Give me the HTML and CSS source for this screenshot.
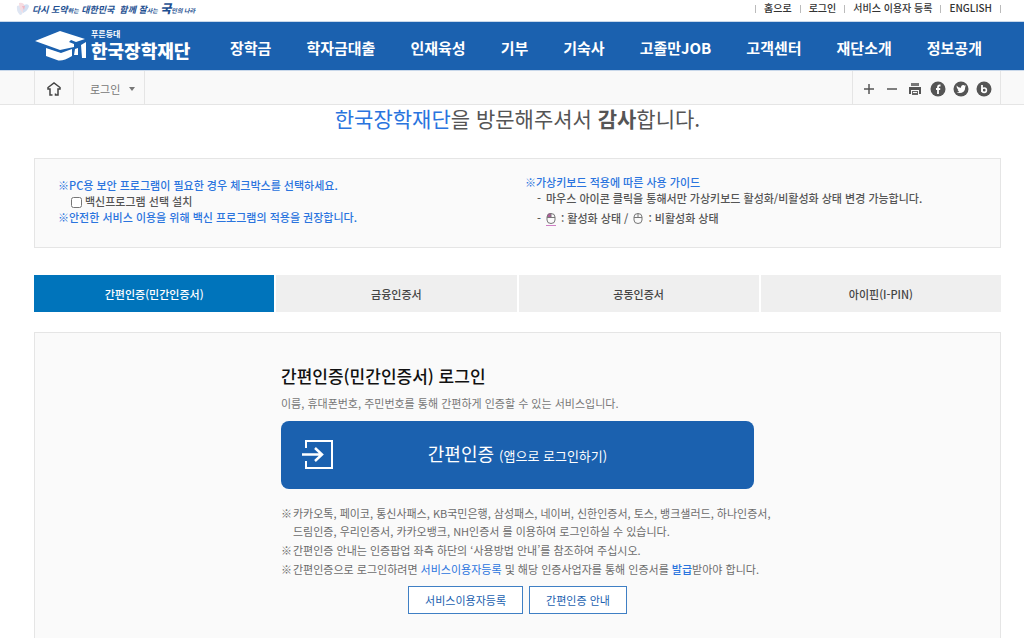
FILE: index.html
```html
<!DOCTYPE html>
<html lang="ko">
<head>
<meta charset="utf-8">
<meta name="viewport" content="width=device-width, initial-scale=1">
<title>로그인 - 한국장학재단</title>
<link rel="stylesheet" href="styles.css">
</head>
<body>
<header>
  <div class="topbar">
    <div class="slogan">
      <svg class="slogan-mark" viewBox="0 0 14 16" aria-hidden="true">
        <path d="M1 5Q5 3 7 9Q7 14 4 14Q0 10 1 5Z" fill="#dfe6f3"/>
        <path d="M3 2Q8 1 9 6Q9 10 7 12Q3 8 3 2Z" fill="#f7dce1"/>
        <path d="M8 4Q12 2 13 5Q12 10 7 12Q6 8 8 4Z" fill="#d3e0f3"/>
        <path d="M6 5L9 5L8 9Z" fill="#f0b8c4"/>
      </svg>
      <p class="slogan-text">다시 도약<small>하는</small> 대한민국 &nbsp;함께 잘<small>사는</small> <b>국</b><small>민의 나라</small></p>
    </div>
    <ul class="util">
      <li><a href="#">홈으로</a></li>
      <li><a href="#">로그인</a></li>
      <li><a href="#">서비스 이용자 등록</a></li>
      <li><a href="#">ENGLISH</a></li>
    </ul>
  </div>
  <div class="mainbar">
    <a class="logo" href="#">
      <svg class="logo-mark" viewBox="0 0 54 32" aria-hidden="true">
        <path d="M0 11L25 1L50 9L41 12L36 10L34 12L39 14V17L25 20Z" fill="#fff"/>
        <path d="M11 18L26 23L37 19V26Q27 32 22 30L11 26Z" fill="#fff"/>
        <path d="M40 19L43 18V25L39 25ZM46 15L51 12V28H47Z" fill="#fff"/>
      </svg>
      <span class="logo-text"><small>푸른등대</small><strong>한국장학재단</strong></span>
    </a>
    <nav class="gnb">
      <a href="#">장학금</a><a href="#">학자금대출</a><a href="#">인재육성</a><a href="#">기부</a><a href="#">기숙사</a><a href="#">고졸만JOB</a><a href="#">고객센터</a><a href="#">재단소개</a><a href="#">정보공개</a>
    </nav>
  </div>
  <div class="subbar">
    <a class="home" href="#" aria-label="홈">
      <svg width="14" height="14" viewBox="0 0 14 14" fill="none" stroke="#444" stroke-width="1.5"><path d="M5.500 13H3V7H1V5.500L7 1L13 5.500V7H11V13H8.500V11.500"/></svg>
    </a>
    <button class="crumb" type="button">로그인
      <svg width="6" height="4" viewBox="0 0 6 4" aria-hidden="true"><path d="M0 0H6L3 4Z" fill="#777"/></svg>
    </button>
    <div class="tools">
      <button type="button" aria-label="확대"><svg viewBox="0 0 16 16"><path d="M8 3V13M3 8H13" stroke="#555" stroke-width="1.500"/></svg></button>
      <button type="button" aria-label="축소"><svg viewBox="0 0 16 16"><path d="M3 8H13" stroke="#555" stroke-width="1.500"/></svg></button>
      <button type="button" aria-label="인쇄"><svg viewBox="0 0 16 16"><path d="M4 2H12V5H4Z" fill="#777"/><path fill-rule="evenodd" d="M2 6H14V13H12V9H4V13H2Z" fill="#555"/><path d="M5 10H11V14H5Z" fill="#666"/><path d="M6 11.500H10" stroke="#f9f9f9"/></svg></button>
      <button type="button" aria-label="페이스북"><svg viewBox="0 0 16 16"><circle cx="8" cy="8" r="7.500" fill="#555"/><path d="M10.500 4.500H9.500Q8 4.500 8 6V13M6 8H10.200" fill="none" stroke="#fff" stroke-width="1.800"/></svg></button>
      <button type="button" aria-label="트위터"><svg viewBox="0 0 16 16"><circle cx="8" cy="8" r="7.500" fill="#555"/><path d="M3.500 4.500Q5.500 6.800 8 6.700Q8 4 10.200 4Q11.200 4 11.800 4.700L13 4.300L12.300 5.800Q12.300 9 10.500 10.700Q7.500 13 3.500 11.200Q5.500 11.200 6.300 10.300Q4.800 10 4.500 8.800L5.300 8.700Q3.500 7.500 3.500 4.500Z" fill="#fff"/></svg></button>
      <button type="button" aria-label="블로그"><svg viewBox="0 0 16 16"><circle cx="8" cy="8" r="7.500" fill="#555"/><path d="M6 4V11" stroke="#fff" stroke-width="1.800"/><circle cx="8.200" cy="9.200" r="2.200" fill="none" stroke="#fff" stroke-width="1.600"/></svg></button>
    </div>
  </div>
</header>

<main>
  <h1 class="welcome"><em>한국장학재단</em>을 방문해주셔서 <strong>감사</strong>합니다.</h1>

  <section class="notice">
    <div class="notice-pc">
      <p class="point">PC용 보안 프로그램이 필요한 경우 체크박스를 선택하세요.</p>
      <label class="check"><input type="checkbox">백신프로그램 선택 설치</label>
      <p class="point">안전한 서비스 이용을 위해 백신 프로그램의 적용을 권장합니다.</p>
    </div>
    <div class="notice-key">
      <p class="point">가상키보드 적용에 따른 사용 가이드</p>
      <ul>
        <li>마우스 아이콘 클릭을 통해서만 가상키보드 활성화/비활성화 상태 변경 가능합니다.</li>
        <li class="states">
          <svg class="mouse" viewBox="0 0 10 14" fill="none" stroke="#777"><path d="M1 5H5V1Q1 1 1 5Z" fill="#b45a9c" stroke="none"/><path d="M1 5Q1 1.500 5 1.500T9 5V8Q9 11.500 5 11.500T1 8ZM1 5.500H9M5 1.500V5.500"/><path d="M0 13.500H10" stroke="#cf7fc4"/></svg>
          <span>: 활성화 상태 /</span>
          <svg class="mouse" viewBox="0 0 10 14" fill="none" stroke="#777"><path d="M1 5Q1 1.500 5 1.500T9 5V8Q9 11.500 5 11.500T1 8ZM1 5.500H9M5 1.500V5.500"/></svg>
          <span>: 비활성화 상태</span>
        </li>
      </ul>
    </div>
  </section>

  <div class="tabs" role="tablist">
    <button type="button" role="tab" aria-selected="true">간편인증(민간인증서)</button>
    <button type="button" role="tab" aria-selected="false">금융인증서</button>
    <button type="button" role="tab" aria-selected="false">공동인증서</button>
    <button type="button" role="tab" aria-selected="false">아이핀(I-PIN)</button>
  </div>

  <section class="panel">
    <div class="panel-body">
      <h2>간편인증(민간인증서) 로그인</h2>
      <p class="lead">이름, 휴대폰번호, 주민번호를 통해 간편하게 인증할 수 있는 서비스입니다.</p>
      <button class="login" type="button">
        <svg width="31" height="29" viewBox="0 0 31 29" fill="none" stroke="#fff" stroke-width="2" aria-hidden="true"><path d="M4 8V1H30V28H4V21"/><path d="M0 14.500H20M13 8L20 14.500L13 21" stroke-width="2.500"/></svg>
        <span>간편인증 <small>(앱으로 로그인하기)</small></span>
      </button>
      <ul class="guide">
        <li>카카오톡, 페이코, 통신사패스, KB국민은행, 삼성패스, 네이버, 신한인증서, 토스, 뱅크샐러드, 하나인증서,<br>드림인증, 우리인증서, 카카오뱅크, NH인증서 를 이용하여 로그인하실 수 있습니다.</li>
        <li>간편인증 안내는 인증팝업 좌측 하단의 ‘사용방법 안내’를 참조하여 주십시오.</li>
        <li>간편인증으로 로그인하려면 <a href="#">서비스이용자등록</a> 및 해당 인증사업자를 통해 인증서를 <a class="issue" href="#">발급</a>받아야 합니다.</li>
      </ul>
      <div class="actions">
        <a href="#">서비스이용자등록</a>
        <a href="#">간편인증 안내</a>
      </div>
    </div>
  </section>
</main>
</body>
</html>
```
FILE: styles.css
```css
* { box-sizing: border-box; }
body {
  margin: 0;
  background: #fff;
  color: #555;
  font: 11px/18px "Noto Sans CJK KR", "Noto Sans", sans-serif;
  overflow-x: hidden;
}
h1, h2, p, ul { margin: 0; padding: 0; }
ul { list-style: none; }
a { color: inherit; text-decoration: none; }
button { border: 0; padding: 0; background: none; color: inherit; font: inherit; cursor: pointer; }
svg { display: block; flex: none; }

.topbar {
  display: flex;
  justify-content: space-between;
  align-items: center;
  height: 22px;
  padding: 0 23px 5px 16px;
  border-bottom: 1px solid #c9d8ea;
}
.slogan { display: flex; align-items: center; gap: 2px; padding-top: 2px; }
.slogan-mark { width: 14px; height: 16px; }
.slogan-text { color: #1d4f91; font-size: 9px; font-style: italic; font-weight: 700; white-space: nowrap; }
.slogan-text small { font-size: 6px; }
.slogan-text b { font-size: 12px; }
.util { display: flex; color: #333; font-size: 10px; font-weight: 500; line-height: 16px; }
.util li { display: flex; align-items: center; }
.util li::before, .util li:last-child::after { content: ""; width: 1px; height: 8px; margin-top: 2px; background: #bbb; }
.util a { padding: 0 8px; }

.mainbar {
  display: flex;
  align-items: center;
  height: 48px;
  padding: 0 42px 0 35px;
  background: #1b61af;
  color: #fff;
}
.logo { display: flex; align-items: center; gap: 2px; flex: 0 0 195px; }
.logo-mark { width: 54px; height: 32px; }
.logo-text { display: flex; flex-direction: column; padding-bottom: 4px; white-space: nowrap; }
.logo-text small { font-size: 8px; font-weight: 700; line-height: 12px; }
.logo-text strong { font-size: 18px; font-weight: 900; line-height: 20px; }
.gnb { display: flex; flex: 1; justify-content: space-between; font-size: 15px; font-weight: 700; line-height: 24px; padding-top: 4px; white-space: nowrap; }

.subbar {
  display: flex;
  height: 35px;
  padding: 0 23px 0 34px;
  background: #f9f9f9;
  border-top: 1px solid #c9d8ea;
  border-bottom: 1px solid #e5e5e5;
}
.home { display: flex; align-items: center; justify-content: center; width: 40px; border: solid #e5e5e5; border-width: 0 1px; padding-top: 3px; }
.crumb { display: flex; align-items: center; gap: 9px; padding: 2px 9px 0 16px; color: #777; border-right: 1px solid #e5e5e5; }
.tools { display: flex; align-items: center; gap: 7px; margin-left: auto; padding: 3px 8px 0; border: solid #e5e5e5; border-width: 0 1px; }
.tools svg { width: 16px; height: 16px; }

main { padding: 0 23px 0 34px; }
.welcome { color: #555; font-size: 21px; font-weight: 400; line-height: 26px; text-align: center; }
.welcome em { color: #2a74de; font-style: normal; }
.welcome strong { font-weight: 700; }

.notice {
  display: grid;
  grid-template-columns: 467px 1fr;
  margin-top: 27px;
  padding: 15px 23px 20px;
  min-height: 90px;
  border: 1px solid #e5e5e5;
  background: #fafafa;
  font-weight: 500;
  line-height: 16px;
}
.point { color: #2a74de; }
.point::before { content: "※"; display: inline-block; width: 11px; }
.notice-pc { padding-top: 3px; }
.check { display: flex; align-items: center; gap: 3px; padding-left: 13px; color: #555; }
.check input { width: 11px; height: 11px; margin: 2px 0 0; }
.notice-key li { display: flex; align-items: center; gap: 5px; padding-left: 12px; white-space: nowrap; }
.notice-key li::before { content: "-"; }
.notice-key .states { padding-top: 3px; }
.mouse { width: 10px; height: 14px; margin-top: 3px; }

.tabs { display: grid; grid-template-columns: repeat(4, 1fr); gap: 2px; margin-top: 27px; }
.tabs button { height: 37px; background: #efefef; color: #444; font-weight: 500; }
.tabs button[aria-selected="true"] { background: #0074bb; color: #fff; }

.panel { margin-top: 20px; padding: 30px 20px; border: solid #e5e5e5; border-width: 1px 1px 0; background: #fafafa; }
.panel-body { max-width: 473px; margin: 0 auto; }
h2 { color: #111; font-size: 17px; font-weight: 500; line-height: 26px; }
.lead { padding-top: 5px; color: #777; }
.login {
  display: grid;
  grid-template-columns: 1fr auto 1fr;
  align-items: center;
  width: 100%;
  height: 68px;
  margin-top: 9px;
  padding: 0 21px 2px;
  border-radius: 8px;
  background: #1b61af;
  color: #fff;
  font-size: 18px;
  line-height: 28px;
}
.login small { font-size: 13px; }
.guide { padding-top: 15px; color: #6c6c6c; white-space: nowrap; }
.guide li { padding: 0 0 1px 12px; text-indent: -12px; }
.guide li::before { content: "※"; display: inline-block; width: 12px; text-indent: 0; }
.guide a { color: #2a74de; }
.guide .issue { font-weight: 500; }
.actions { display: flex; justify-content: center; gap: 6px; margin-top: 7px; }
.actions a { padding: 4px 16px; border: 1px solid #3f7fc4; background: #fff; color: #1b61af; }
```
